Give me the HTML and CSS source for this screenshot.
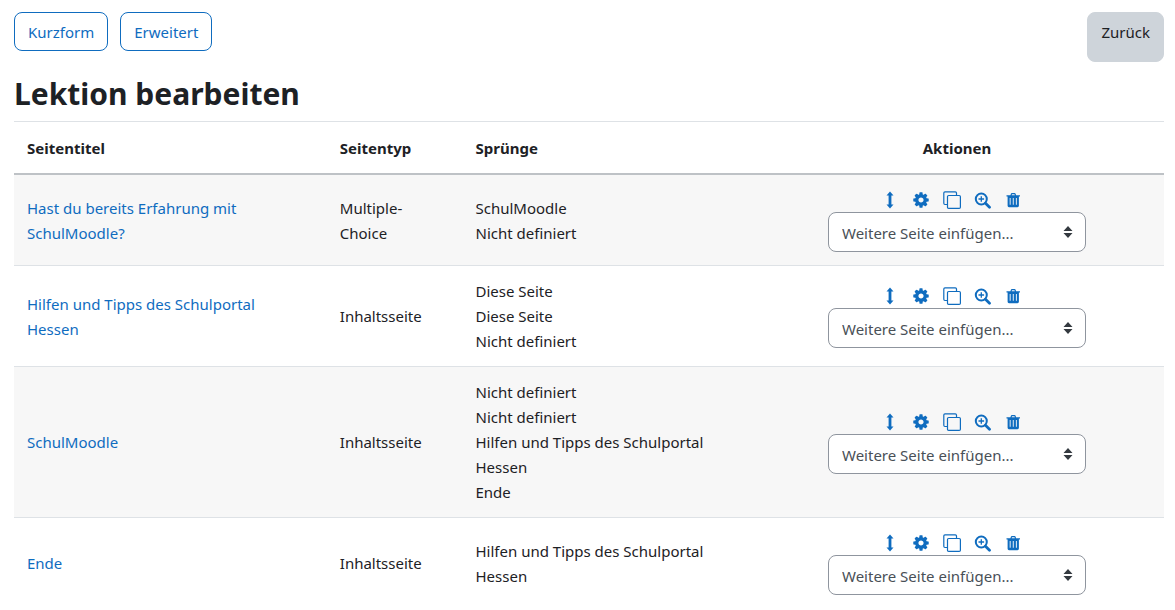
FILE: index.html
```html
<!DOCTYPE html>
<html lang="de">
<head>
  <meta charset="UTF-8">
  <meta name="viewport" content="width=device-width, initial-scale=1">
  <title>Lektion bearbeiten</title>
  <link rel="stylesheet" href="styles.css">
</head>
<body>
  <svg class="sprite" aria-hidden="true">
    <symbol id="move" viewBox="0 0 18 18">
      <path d="M9 .5 12.5 4.5H10.4V13.500H12.500L9 17.500 5.500 13.500H7.600V4.500H5.500z"/>
    </symbol>
    <symbol id="cog" viewBox="0 0 1792 1792">
      <path d="M1152 896q0-106-75-181t-181-75-181 75-75 181 75 181 181 75 181-75 75-181zm512-109v222q0 12-8 23t-20 13l-185 28q-19 54-39 91 35 50 107 138 10 12 10 25t-9 23q-27 37-99 108t-94 71q-12 0-26-9l-138-108q-44 23-91 38-16 136-29 186-7 28-36 28h-222q-14 0-24.500-8.500t-11.500-21.500l-28-184q-49-16-90-37l-141 107q-10 9-25 9-14 0-25-11-126-114-165-168-7-10-7-23 0-12 8-23 15-21 51-66.500t54-70.500q-27-50-41-99l-183-27q-13-2-21-12.500t-8-23.500v-222q0-12 8-23t19-13l186-28q14-46 39-92-40-57-107-138-10-12-10-24 0-10 9-23 26-36 98.500-107.500t94.500-71.500q13 0 26 10l138 107q44-23 91-38 16-136 29-186 7-28 36-28h222q14 0 24.500 8.500t11.500 21.500l28 184q49 16 90 37l142-107q9-9 24-9 13 0 25 10 129 119 165 170 7 8 7 22 0 12-8 23-15 21-51 66.500t-54 70.500q26 50 41 98l183 28q13 2 21 12.500t8 23.500z"/>
    </symbol>
    <symbol id="copy" viewBox="0 0 18 18">
      <path fill="none" stroke="currentColor" stroke-width="1.2" d="M4.500 13.500H2Q.8 13.500.8 12.300V2Q.8.8 2 .8H12.300Q13.500.8 13.500 2V4.500M5.700 4.500H16.200Q17.400 4.500 17.400 5.700V16.200Q17.400 17.400 16.200 17.400H5.700Q4.500 17.400 4.500 16.200V5.700Q4.500 4.500 5.700 4.500z"/>
    </symbol>
    <symbol id="zoom" viewBox="0 0 18 18">
      <g fill="none" stroke="currentColor">
        <circle cx="7.300" cy="8" r="5.500" stroke-width="2"/>
        <path d="M11.500 12.200 15.500 16.200" stroke-width="2.800" stroke-linecap="round"/>
        <path d="M4.500 8H10.100M7.300 5.200V10.800" stroke-width="1.300"/>
      </g>
    </symbol>
    <symbol id="trash" viewBox="0 0 18 18">
      <path fill-rule="evenodd" d="M5.400 4.200 6 2.600Q6.200 2 6.900 2H9.600Q10.300 2 10.500 2.600L11.100 4.200H15V5.500H13.900V14.800Q13.900 16.200 12.500 16.200H4Q2.600 16.200 2.600 14.800V5.500H1.500V4.200zM6.700 4.200H9.800L9.500 3.200H7zM4.700 7V13.800H5.600V7zM7.800 7V13.800H8.700V7zM10.900 7V13.800H11.800V7z"/>
    </symbol>
    <symbol id="updown" viewBox="0 0 10 12">
      <path d="M5 0 9.500 5H.5zM5 12 .5 7H9.500z"/>
    </symbol>
  </svg>

  <div class="toolbar">
    <button type="button" class="btn btn-outline">Kurzform</button>
    <button type="button" class="btn btn-outline">Erweitert</button>
    <button type="button" class="btn btn-back">Zurück</button>
  </div>

  <h2>Lektion bearbeiten</h2>

  <table class="pages">
    <thead>
      <tr>
        <th class="col-title">Seitentitel</th>
        <th class="col-type">Seitentyp</th>
        <th class="col-jumps">Sprünge</th>
        <th class="col-actions">Aktionen</th>
      </tr>
    </thead>
    <tbody>
      <tr>
        <td class="col-title"><a href="#">Hast du bereits Erfahrung mit SchulMoodle?</a></td>
        <td class="col-type">Multiple-Choice</td>
        <td>SchulMoodle<br>Nicht definiert</td>
        <td class="col-actions">
          <div class="icons">
            <a href="#" aria-label="Verschieben"><svg><use href="#move"/></svg></a>
            <a href="#" aria-label="Bearbeiten"><svg><use href="#cog"/></svg></a>
            <a href="#" aria-label="Duplizieren"><svg><use href="#copy"/></svg></a>
            <a href="#" aria-label="Vorschau"><svg><use href="#zoom"/></svg></a>
            <a href="#" aria-label="Löschen"><svg><use href="#trash"/></svg></a>
          </div>
          <div class="select">
            <select aria-label="Weitere Seite einfügen"><option>Weitere Seite einfügen...</option></select>
            <svg><use href="#updown"/></svg>
          </div>
        </td>
      </tr>
      <tr>
        <td class="col-title"><a href="#">Hilfen und Tipps des Schulportal Hessen</a></td>
        <td class="col-type">Inhaltsseite</td>
        <td>Diese Seite<br>Diese Seite<br>Nicht definiert</td>
        <td class="col-actions">
          <div class="icons">
            <a href="#" aria-label="Verschieben"><svg><use href="#move"/></svg></a>
            <a href="#" aria-label="Bearbeiten"><svg><use href="#cog"/></svg></a>
            <a href="#" aria-label="Duplizieren"><svg><use href="#copy"/></svg></a>
            <a href="#" aria-label="Vorschau"><svg><use href="#zoom"/></svg></a>
            <a href="#" aria-label="Löschen"><svg><use href="#trash"/></svg></a>
          </div>
          <div class="select">
            <select aria-label="Weitere Seite einfügen"><option>Weitere Seite einfügen...</option></select>
            <svg><use href="#updown"/></svg>
          </div>
        </td>
      </tr>
      <tr>
        <td class="col-title"><a href="#">SchulMoodle</a></td>
        <td class="col-type">Inhaltsseite</td>
        <td>Nicht definiert<br>Nicht definiert<br>Hilfen und Tipps des Schulportal Hessen<br>Ende</td>
        <td class="col-actions">
          <div class="icons">
            <a href="#" aria-label="Verschieben"><svg><use href="#move"/></svg></a>
            <a href="#" aria-label="Bearbeiten"><svg><use href="#cog"/></svg></a>
            <a href="#" aria-label="Duplizieren"><svg><use href="#copy"/></svg></a>
            <a href="#" aria-label="Vorschau"><svg><use href="#zoom"/></svg></a>
            <a href="#" aria-label="Löschen"><svg><use href="#trash"/></svg></a>
          </div>
          <div class="select">
            <select aria-label="Weitere Seite einfügen"><option>Weitere Seite einfügen...</option></select>
            <svg><use href="#updown"/></svg>
          </div>
        </td>
      </tr>
      <tr>
        <td class="col-title"><a href="#">Ende</a></td>
        <td class="col-type">Inhaltsseite</td>
        <td>Hilfen und Tipps des Schulportal Hessen</td>
        <td class="col-actions">
          <div class="icons">
            <a href="#" aria-label="Verschieben"><svg><use href="#move"/></svg></a>
            <a href="#" aria-label="Bearbeiten"><svg><use href="#cog"/></svg></a>
            <a href="#" aria-label="Duplizieren"><svg><use href="#copy"/></svg></a>
            <a href="#" aria-label="Vorschau"><svg><use href="#zoom"/></svg></a>
            <a href="#" aria-label="Löschen"><svg><use href="#trash"/></svg></a>
          </div>
          <div class="select">
            <select aria-label="Weitere Seite einfügen"><option>Weitere Seite einfügen...</option></select>
            <svg><use href="#updown"/></svg>
          </div>
        </td>
      </tr>
    </tbody>
  </table>
</body>
</html>
```
FILE: styles.css
```css
* {
  box-sizing: border-box;
}

body {
  margin: 0;
  padding: 12px 11px 0 14px;
  font-family: "Segoe UI", "Noto Sans", "Open Sans", sans-serif;
  font-size: 15px;
  line-height: 25px;
  color: #1d2125;
  background: #fff;
}

a {
  color: #0f6cbf;
  text-decoration: none;
}

.sprite {
  display: none;
}

.toolbar {
  display: flex;
  align-items: flex-start;
  gap: 12px;
}

.btn {
  padding: 7px 13px 5px;
  border: 1px solid #0f6cbf;
  border-radius: 8px;
  font: inherit;
  cursor: pointer;
}

.btn-outline {
  color: #0f6cbf;
  background: #fff;
}

.btn-back {
  margin-left: auto;
  padding-bottom: 16px;
  border-color: #ced4da;
  color: #1d2125;
  background: #ced4da;
}

h2 {
  margin: 12px 0 8px;
  font-size: 30px;
  line-height: 39px;
  font-weight: bold;
}

.pages {
  width: 100%;
  border-collapse: separate;
  border-spacing: 0;
  table-layout: fixed;
}

.pages th,
.pages td {
  padding: 13px 13px 12px;
  border-top: 1px solid #dee2e6;
  text-align: left;
  vertical-align: middle;
}

.pages th {
  padding: 14px 13px 12px;
  border-bottom: 2px solid #bec2c6;
}

.pages tbody tr:first-child td {
  border-top: none;
}

.pages tbody tr:nth-child(odd) {
  background: #f7f7f7;
}

.pages .col-title {
  width: 27.2%;
  padding-right: 32px;
}

.pages .col-type {
  width: 11.8%;
  padding-right: 32px;
}

.col-jumps {
  width: 25%;
}

.pages .col-actions {
  text-align: center;
}

.icons {
  display: flex;
  justify-content: center;
  height: 24px;
  align-items: center;
}

.icons a {
  display: flex;
  margin: 0 11px 0 2px;
}

.icons svg {
  width: 18px;
  height: 18px;
  fill: currentColor;
}

.select {
  position: relative;
  width: 258px;
  margin: 0 auto 1px;
}

.select select {
  display: block;
  width: 100%;
  height: 40px;
  padding: 2px 13px 0;
  border: 1px solid #8f959e;
  border-radius: 8px;
  appearance: none;
  font: inherit;
  color: #495057;
  background: #fff;
}

.select svg {
  position: absolute;
  top: 14px;
  right: 13px;
  width: 10px;
  height: 12px;
  fill: #343a40;
  pointer-events: none;
}
```
